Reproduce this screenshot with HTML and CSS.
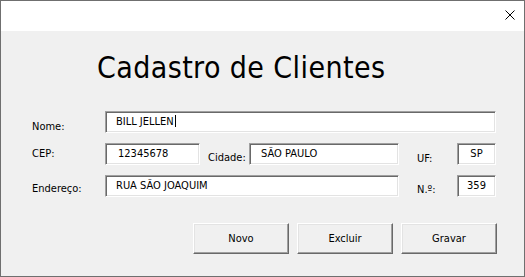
FILE: index.html
```html
<!DOCTYPE html>
<html lang="pt-BR">
<head>
    <meta charset="UTF-8">
    <meta name="viewport" content="width=device-width, initial-scale=1.0">
    <title>Cadastro de Clientes</title>
    <link rel="stylesheet" href="styles.css">
</head>
<body>
    <div class="window">
        <div class="titlebar">
            <svg class="close" width="10" height="10" viewBox="0 0 10 10">
                <path d="M0.5 0.5 L9.5 9.5 M9.5 0.5 L0.5 9.5" stroke="#000" stroke-width="1" fill="none"/>
            </svg>
        </div>

        <div class="content">
            <h1 class="title">Cadastro de Clientes</h1>

            <div class="row">
                <span class="label label-nome">Nome:</span>
                <div class="field field-nome">BILL JELLEN<span class="caret"></span></div>
            </div>

            <div class="row">
                <span class="label label-cep">CEP:</span>
                <div class="field field-cep">12345678</div>
                <span class="label label-cidade">Cidade:</span>
                <div class="field field-cidade">SÃO PAULO</div>
                <span class="label label-uf">UF:</span>
                <div class="field field-small">SP</div>
            </div>

            <div class="row">
                <span class="label label-end">Endereço:</span>
                <div class="field field-end">RUA SÃO JOAQUIM</div>
                <span class="label label-num">N.º:</span>
                <div class="field field-small">359</div>
            </div>

            <div class="buttons">
                <button class="btn">Novo</button>
                <button class="btn">Excluir</button>
                <button class="btn">Gravar</button>
            </div>
        </div>
    </div>
</body>
</html>
```

FILE: styles.css
```css
body {
    margin: 0;
    font-family: "DejaVu Sans Condensed", "DejaVu Sans", sans-serif;
    font-stretch: condensed;
    color: #000;
}

.window {
    width: 525px;
    height: 277px;
    box-sizing: border-box;
    border: 1px solid #6f6f6f;
    display: flex;
    flex-direction: column;
    background-color: #f0f0f0;
}

.titlebar {
    height: 30px;
    background-color: #fff;
    display: flex;
    justify-content: flex-end;
    align-items: flex-start;
    padding: 9px 9px 0 0;
    box-sizing: border-box;
}

.close {
    display: block;
}

.content {
    flex: 1;
    padding-left: 31px;
}

.title {
    margin: 19px 0 25px 65px;
    font-size: 30px;
    line-height: 36px;
    font-weight: normal;
    letter-spacing: 0.4px;
}

.row {
    display: flex;
    align-items: flex-start;
    height: 22px;
    margin-bottom: 10px;
}

.label {
    font-size: 11px;
    line-height: 13px;
    box-sizing: border-box;
}

.label-nome { width: 73px; margin-top: 9px; }
.label-cep { width: 73px; margin-top: 4px; }
.label-end { width: 73px; margin-top: 7px; }
.label-cidade { width: 49px; padding-left: 8px; margin-top: 8px; }
.label-uf { width: 58px; padding-left: 18px; margin-top: 9px; }
.label-num { width: 58px; padding-left: 18px; margin-top: 8px; }

.field {
    height: 22px;
    box-sizing: border-box;
    background-color: #fff;
    border: 1px solid;
    border-color: #a0a0a0 #fff #fff #a0a0a0;
    box-shadow: inset 1px 1px 0 #696969, inset -1px -1px 0 #e3e3e3;
    font-size: 11px;
    line-height: 13px;
    padding: 3px 0 0 10px;
    white-space: nowrap;
}

.field-nome { width: 391px; }
.field-cep { width: 95px; padding-left: 12px; }
.field-cidade { width: 150px; padding-left: 11px; }
.field-end { width: 294px; }
.field-small {
    width: 39px;
    padding-left: 0;
    text-align: center;
}

.caret {
    display: inline-block;
    width: 1px;
    height: 12px;
    background-color: #000;
    vertical-align: -2px;
    margin-left: 1px;
}

/* row margin collapses into this one, so it holds the full gap */
.buttons {
    display: flex;
    gap: 8px;
    margin: 26px 0 0 161px;
}

.btn {
    width: 96px;
    height: 31px;
    font-family: inherit;
    font-stretch: condensed;
    font-size: 11px;
    color: #000;
    background-color: #f0f0f0;
    border: 1px solid;
    border-color: #fff #696969 #696969 #fff;
    box-shadow: inset -1px -1px 0 #a0a0a0, inset 1px 1px 0 #e3e3e3;
    padding: 0;
}
```
